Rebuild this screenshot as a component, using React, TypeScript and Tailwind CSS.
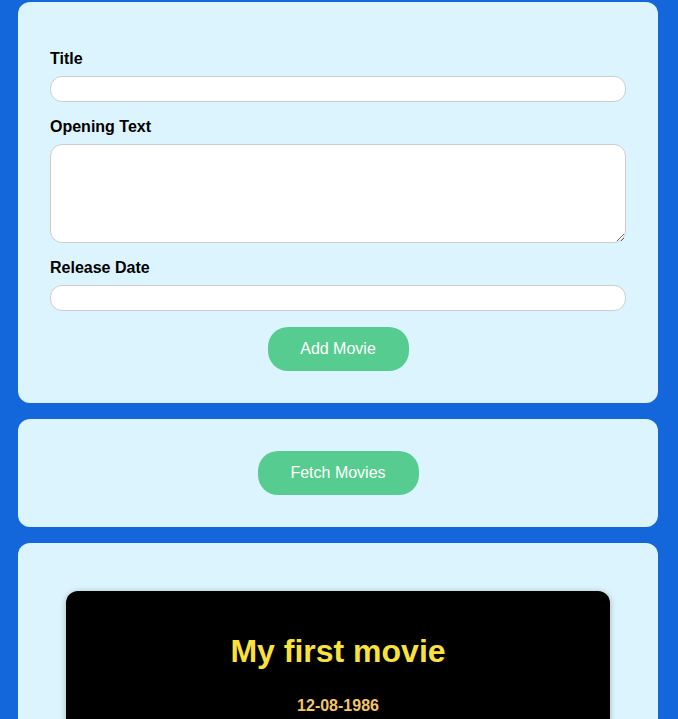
import React from "react";

export default function App() {
  const font = { fontFamily: '"Liberation Sans", Arial, sans-serif' };
  return (
    <div className="min-h-[719px] bg-[#1467da] pt-[2px] pb-4" style={font}>
      <div className="ml-[18px] flex w-[640px] flex-col gap-4">
        <section className="rounded-[12px] bg-[#dcf4fd] p-8">
          <div className="mt-4 flex flex-col gap-2">
            <label className="block text-[16px] leading-[18px] font-bold text-black">Title</label>
            <input type="text" className="block h-[26px] w-full rounded-[12px] border border-[#ccc] bg-white px-1" />
          </div>
          <div className="mt-4 flex flex-col gap-2">
            <label className="block text-[16px] leading-[18px] font-bold text-black">Opening Text</label>
            <textarea rows={5} className="block h-[99px] w-full rounded-[12px] border border-[#ccc] bg-white px-1" />
          </div>
          <div className="mt-4 flex flex-col gap-2">
            <label className="block text-[16px] leading-[18px] font-bold text-black">Release Date</label>
            <input type="text" className="block h-[26px] w-full rounded-[12px] border border-[#ccc] bg-white px-1" />
          </div>
          <div className="mt-4 flex justify-center">
            <button className="h-[44px] w-[141px] rounded-[20px] bg-[#57cc90] text-[16px] text-white">Add Movie</button>
          </div>
        </section>
        <section className="flex justify-center rounded-[12px] bg-[#dcf4fd] p-8">
          <button className="h-[44px] w-[161px] rounded-[20px] bg-[#57cc90] text-[16px] text-white">Fetch Movies</button>
        </section>
        <section className="rounded-[12px] bg-[#dcf4fd] p-8 pb-4">
          <ul>
            <li className="m-4 rounded-[12px] bg-black p-4 pb-6 text-center shadow-[0_1px_6px_rgba(0,0,0,0.25)]">
              <h2 className="mt-[26px] text-[32px] leading-[37px] font-bold text-[#f9e23e]">My first movie</h2>
              <h3 className="mt-[27px] text-[16px] leading-[18px] font-bold text-[#f2c46c]">12-08-1986</h3>
              <p className="mt-4 text-[16px] text-white">Opening text</p>
            </li>
          </ul>
        </section>
      </div>
    </div>
  );
}
